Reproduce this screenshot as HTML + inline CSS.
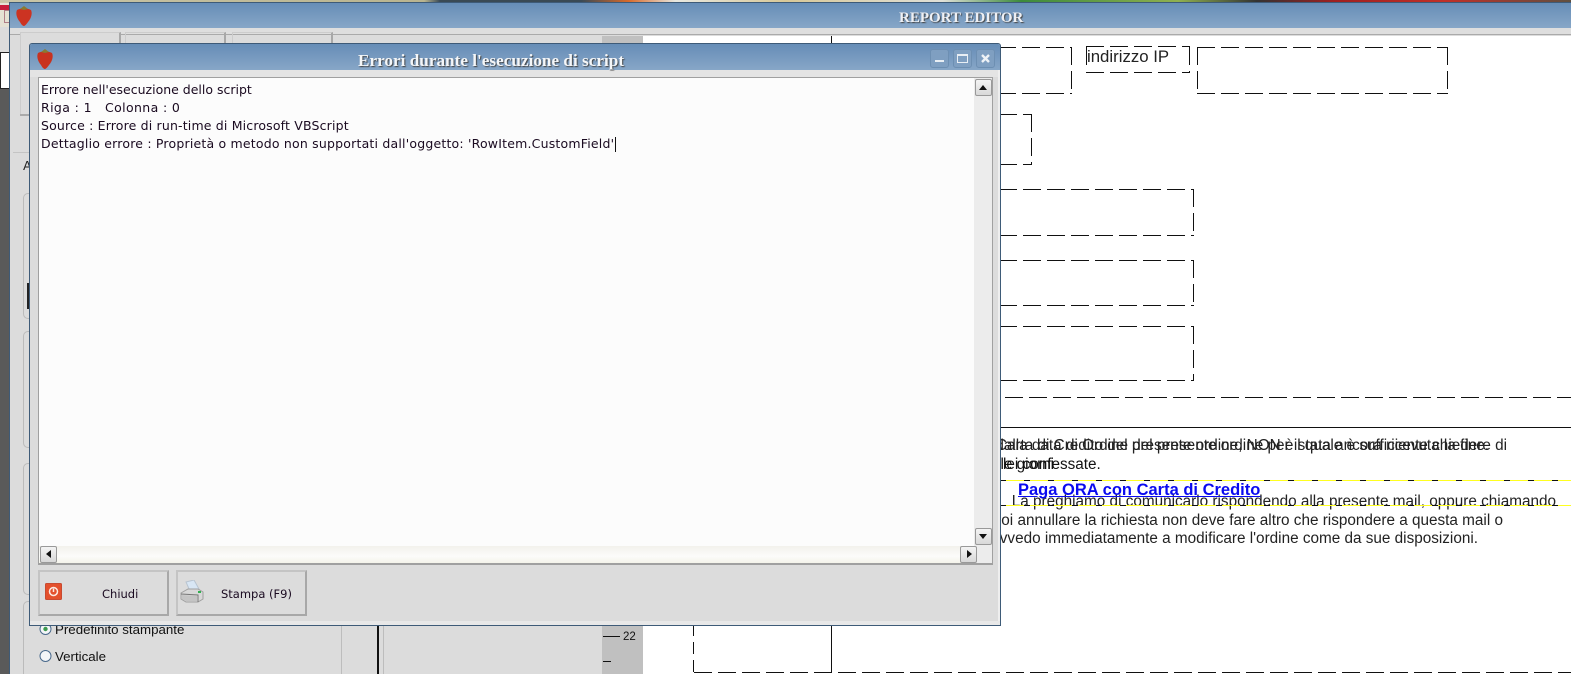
<!DOCTYPE html>
<html><head><meta charset="utf-8"><style>
*{box-sizing:border-box}
html,body{margin:0;padding:0;width:1571px;height:674px;overflow:hidden;background:#fff}
.a{position:absolute}
.t{position:absolute;white-space:nowrap;font-family:"DejaVu Sans",sans-serif;font-size:12.500px;color:#1a0a20;line-height:18px}
.r{position:absolute;white-space:nowrap;font-family:"Liberation Sans",sans-serif;font-size:15.300px;color:#111;line-height:18px}
.tb{background:linear-gradient(#668db7,#87a6c7)}
.title{position:absolute;white-space:nowrap;font-family:"Liberation Serif",serif;font-weight:bold;color:#f4f6f8;text-shadow:1px 1px 1px #444}
.btn{position:absolute;background:#dcdcdc;border:2px solid #a8a8a8;border-top-color:#c4c4c4;border-left-color:#c4c4c4}
.sb{position:absolute;width:17px;height:17px;background:linear-gradient(#f4f4f4,#d8d8d8);border:1px solid #999;border-radius:2px}
.wb{position:absolute;top:49px;width:19px;height:19px;border:1px solid #6d8fb2;border-radius:3px;background:#7f9fc1}
</style></head><body>
<!-- desktop strip -->
<div class="a" style="left:0;top:0;width:1571px;height:3px;background:linear-gradient(90deg,#c9c5a8 0,#b9b48f 27%,#3a4a55 28%,#3a4a55 37%,#d86a2a 40%,#e8e8e0 43%,#d8c898 50%,#e0e0d8 60%,#3c8a3c 65%,#90b050 75%,#333 80%,#a02020 85%,#c03028 92%,#605040 100%)"></div>
<!-- left strip -->
<div class="a" style="left:0;top:3px;width:10px;height:671px;background:#5a5a5a"></div>
<div class="a" style="left:0;top:3px;width:10px;height:24px;background:#e6e2d4"></div>
<div class="a" style="left:0;top:5px;width:10px;height:5px;background:#c81e3a"></div>
<div class="a" style="left:4px;top:10px;width:5px;height:13px;border:1px solid #b08088;border-right:0"></div>
<div class="a" style="left:0;top:27px;width:10px;height:25px;background:#dcdcdc"></div>
<div class="a" style="left:0;top:52px;width:9px;height:37px;background:#fff;border:1px solid #222;border-right:0"></div>
<!-- outer window -->
<div class="a" style="left:9px;top:2px;width:1562px;height:672px;background:#dcdcdc;border-left:1px solid #3e5b78;border-top:1px solid #3e5b78"></div>
<div class="a tb" style="left:10px;top:3px;width:1561px;height:25px"></div>
<div class="a" style="left:10px;top:28px;width:1561px;height:7px;background:#dedede;border-bottom:1px solid #aaa"></div>
<div class="title" style="left:899px;top:8px;font-size:15px;line-height:20px;color:#eef0f4">REPORT EDITOR</div>
<svg class="a" style="left:15px;top:5px" width="18" height="22" viewBox="0 0 18 22"><path d="M2 5C5 3 13 3 16 5C17.500 8 16.500 13 13 17C11 20 9.500 21 9 21C8 21 6.500 20 5 17C1.500 13 .5 8 2 5Z" fill="#cc3322"/><path d="M5 4L9 1L13 4L9 5Z" fill="#8a7a30"/></svg>
<!-- tabs -->
<div class="a" style="left:20px;top:32px;width:101px;height:83px;border:1px solid #ccc;border-right:2px solid #a8a8a8;background:#dcdcdc"></div>
<div class="a" style="left:125px;top:32px;width:101px;height:12px;border:1px solid #ccc;border-right:2px solid #a8a8a8"></div>
<div class="a" style="left:232px;top:32px;width:101px;height:12px;border:1px solid #ccc;border-right:2px solid #a8a8a8"></div>
<div class="a" style="left:20px;top:114px;width:14px;height:2px;background:#aaa"></div>
<div class="a" style="left:13px;top:152px;width:20px;height:1px;background:#c4c4c4"></div>
<div class="t" style="left:23px;top:157px;color:#222">A</div>
<!-- left panels -->
<div class="a" style="left:23px;top:193px;width:20px;height:126px;border:1px solid #bbb;border-right:0;border-radius:5px 0 0 5px"></div>
<div class="a" style="left:27px;top:283px;width:2px;height:26px;background:#222"></div>
<div class="a" style="left:23px;top:331px;width:20px;height:117px;border:1px solid #bbb;border-right:0;border-radius:5px 0 0 5px"></div>
<div class="a" style="left:23px;top:463px;width:20px;height:132px;border:1px solid #bbb;border-right:0;border-radius:5px 0 0 5px"></div>
<div class="a" style="left:23px;top:601px;width:20px;height:73px;border:1px solid #bbb;border-right:0;border-bottom:0;border-radius:5px 0 0 0"></div>
<div class="a" style="left:341px;top:600px;width:1px;height:74px;background:#bdbdbd"></div>
<div class="a" style="left:377px;top:600px;width:2px;height:74px;background:#111"></div>
<div class="a" style="left:383px;top:600px;width:1px;height:74px;background:#bdbdbd"></div>
<svg class="a" style="left:36px;top:620px" width="20" height="46"><circle cx="9.500" cy="9" r="5.500" fill="#f4f6f8" stroke="#4a6a8c"/><circle cx="9.500" cy="9" r="2.200" fill="#3c9a50"/><circle cx="9.500" cy="36" r="5.500" fill="#f4f6f8" stroke="#4a6a8c"/></svg>
<div class="r" style="left:55px;top:621px;font-size:13.300px">Predefinito stampante</div>
<div class="r" style="left:55px;top:648px;font-size:13.300px">Verticale</div>
<!-- ruler + page -->
<div class="a" style="left:602px;top:36px;width:41px;height:638px;background:#c0c0c0"></div>
<div class="a" style="left:643px;top:36px;width:928px;height:638px;background:#fff"></div>
<div class="a" style="left:603px;top:636px;width:17px;height:1px;background:#111"></div>
<div class="a" style="left:603px;top:661px;width:8px;height:1px;background:#111"></div>
<div class="r" style="left:623px;top:628px;font-size:11.500px">22</div>
<!-- overlapped report text -->
<div class="r" style="right:64px;top:437px;color:#222">giorni dalla data di Ordine del presente ordine per il quale è sufficiente chiedere di</div>
<div class="r" style="right:82px;top:437px;color:#222">con Carta di Credito del presente ordine, NON è stata ancora ricevuta la fine.</div>
<div class="r" style="left:992px;top:456px">nle giorni</div>
<div class="r" style="left:1003px;top:456px">lei confessate.</div>
<div class="r" style="right:15px;top:493px;color:#222">La preghiamo di comunicarlo rispondendo alla presente mail, oppure chiamando</div>
<div class="r" style="right:68px;top:512px;color:#222">Se vuoi annullare la richiesta non deve fare altro che rispondere a questa mail o</div>
<div class="r" style="right:93px;top:530px;color:#222">Provvedo immediatamente a modificare l'ordine come da sue disposizioni.</div>
<div class="a" style="left:998px;top:480px;width:573px;height:1px;background:#ffff20"></div>
<div class="a" style="left:998px;top:505px;width:573px;height:1px;background:#ffff20"></div>
<div class="r" style="left:1018px;top:481px;font-weight:bold;color:#0a0af0;font-size:16.500px;text-decoration:underline">Paga ORA con Carta di Credito</div>
<div class="r" style="left:1087px;top:48px;font-size:16.800px;color:#222">indirizzo IP</div>
<!-- lines -->
<svg class="a" style="left:0;top:0" width="1571" height="674" shape-rendering="crispEdges">
<g stroke="#111" fill="none">
<path d="M831.500 36V44M831.500 624V673"/>
<path d="M998 427.500H1571"/>
<g stroke-dasharray="18 6">
<path d="M998 47.500H1072M998 93.500H1072M1071.500 47V94"/>
<path d="M1086 46.500H1190M1086 72.500H1190M1086.500 47V66M1189.500 47V73"/>
<path d="M1197 47.500H1448M1197 93.500H1448M1197.500 47V94M1447.500 47V94"/>
<path d="M999 114.500H1032M999 164.500H1032M1031.500 114V165"/>
<path d="M999 189.500H1194M999 235.500H1194M1193.500 189V236"/>
<path d="M999 260.500H1194M999 305.500H1194M1193.500 260V306"/>
<path d="M999 326.500H1194M999 380.500H1194M1193.500 326V381"/>
<path d="M1005 397.500H1571"/>
<path d="M1000 480.500H1571M1000 505.500H1571" stroke-dasharray="6 18"/>
<path d="M693.500 624V672" stroke-dasharray="12 6"/>
<path d="M694 672.500H1571"/>
</g></g></svg>
<!-- dialog -->
<div class="a" style="left:29px;top:43px;width:972px;height:583px;background:#dcdcdc;border:1px solid #3e5b78;border-radius:3px 3px 0 0"></div>
<div class="a tb" style="left:30px;top:44px;width:970px;height:26px;border-radius:2px 2px 0 0"></div>
<div class="a" style="left:30px;top:70px;width:970px;height:7px;background:#e4e4e4"></div>
<div class="a" style="left:998px;top:70px;width:2px;height:555px;background:#eee"></div>
<div class="a" style="left:30px;top:621px;width:970px;height:4px;background:#e8e8e8"></div>
<svg class="a" style="left:36px;top:48px" width="18" height="22" viewBox="0 0 18 22"><path d="M2 5C5 3 13 3 16 5C17.500 8 16.500 13 13 17C11 20 9.500 21 9 21C8 21 6.500 20 5 17C1.500 13 .5 8 2 5Z" fill="#c8321f"/><path d="M5 4L9 1L13 4L9 5Z" fill="#8a7a30"/></svg>
<div class="title" style="left:358px;top:51px;font-size:17.200px;line-height:20px">Errori durante l'esecuzione di script</div>
<div class="wb" style="left:930px"><div class="a" style="left:4px;top:10px;width:9px;height:2px;background:#e8eef4"></div></div>
<div class="wb" style="left:953px"><div class="a" style="left:3px;top:4px;width:11px;height:9px;border:1px solid #e8eef4;border-top-width:2px"></div></div>
<div class="wb" style="left:976px"><svg class="a" style="left:3px;top:3px" width="11" height="11"><path d="M2 2L9 9M9 2L2 9" stroke="#eef2f6" stroke-width="2.400"/></svg></div>
<!-- text box -->
<div class="a" style="left:38px;top:77px;width:955px;height:488px;background:#e8e8e8;border:1px solid #a0a0a0;border-bottom-width:2px"></div>
<div class="a" style="left:39px;top:78px;width:936px;height:468px;background:#fcfcfc"></div>
<div class="a" style="left:39px;top:546px;width:936px;height:17px;background:linear-gradient(#f2f1ec,#fcfcfa 60%,#f4f3ea)"></div>
<div class="a" style="left:974px;top:78px;width:18px;height:485px;background:#ececec"></div>
<div class="sb" style="left:975px;top:79px"><div class="a" style="left:3px;top:5px;border:4px solid transparent;border-top:0;border-bottom:5px solid #111"></div></div>
<div class="sb" style="left:975px;top:528px"><div class="a" style="left:3px;top:5px;border:4px solid transparent;border-bottom:0;border-top:5px solid #111"></div></div>
<div class="sb" style="left:40px;top:546px"><div class="a" style="left:5px;top:3px;border:4px solid transparent;border-left:0;border-right:5px solid #111"></div></div>
<div class="sb" style="left:960px;top:546px"><div class="a" style="left:6px;top:3px;border:4px solid transparent;border-right:0;border-left:5px solid #111"></div></div>
<div class="t" style="left:41px;top:81px">Errore nell'esecuzione dello script</div>
<div class="t" style="left:41px;top:99px;white-space:pre;letter-spacing:.38px">Riga : 1   Colonna : 0</div>
<div class="t" style="left:41px;top:117px;letter-spacing:.17px">Source : Errore di run-time di Microsoft VBScript</div>
<div class="t" style="left:41px;top:135px;letter-spacing:.2px">Dettaglio errore : Proprietà o metodo non supportati dall'oggetto: 'RowItem.CustomField'</div>
<div class="a" style="left:615px;top:137px;width:1px;height:15px;background:#111"></div>
<!-- buttons -->
<div class="btn" style="left:38px;top:570px;width:131px;height:46px"></div>
<div class="btn" style="left:176px;top:570px;width:131px;height:46px"></div>
<svg class="a" style="left:45px;top:583px" width="18" height="18"><rect x=".5" y=".5" width="16" height="16" rx="1" fill="#e4502c" stroke="#c84a30"/><circle cx="8.500" cy="8.500" r="4" fill="none" stroke="#fbe8e0" stroke-width="1.500"/><path d="M8.500 5.500V9" stroke="#fbe8e0" stroke-width="1.500"/></svg>
<svg class="a" style="left:180px;top:580px" width="25" height="24"><path d="M6 2L14 0L19 9L10 11Z" fill="#d8e6f4" stroke="#b8c4d0"/><path d="M1 13L8 9H18L23 12V19L18 22H6L1 19Z" fill="#d8d8d8" stroke="#a0a0a0"/><path d="M1 14L18 15V22" fill="none" stroke="#777"/><path d="M2 15L17 16V21L6 21L2 19Z" fill="#c4c4c4"/><rect x="18" y="11" width="3" height="2" fill="#30b050"/></svg>
<div class="t" style="left:102px;top:585px;font-size:11.500px">Chiudi</div>
<div class="t" style="left:221px;top:585px;font-size:11.500px">Stampa (F9)</div>
</body></html>
